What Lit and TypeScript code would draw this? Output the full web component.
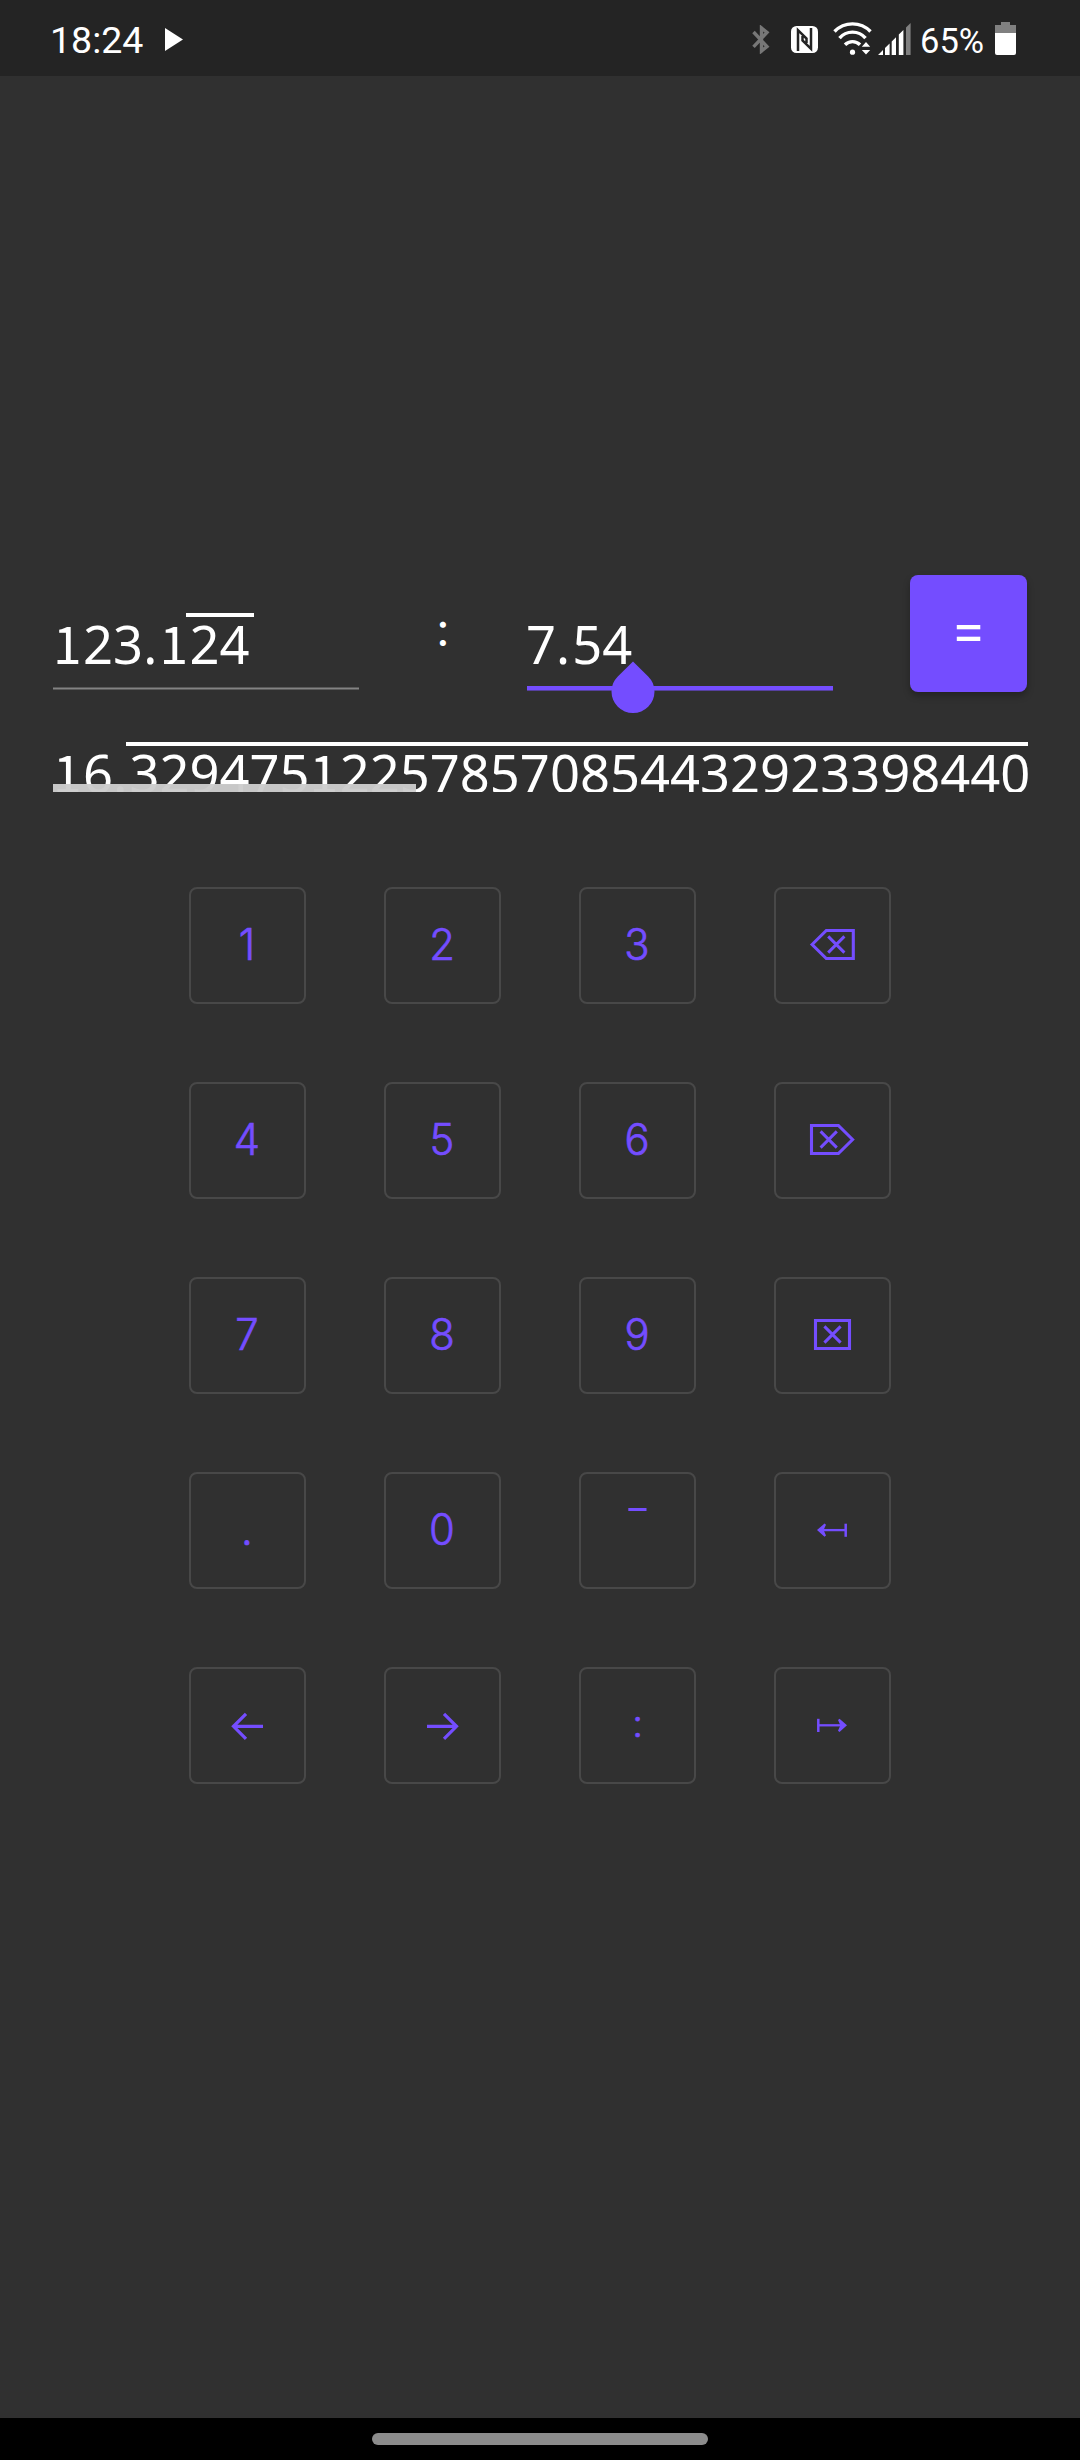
import { LitElement, html, css, svg } from "lit";
import { customElement, property, state } from "lit/decorators.js";
import { classMap } from "lit/directives/class-map.js";

const icons: Record<string, unknown> = {
  backspace: svg`<path d="M38.1 57.5 52.3 43.5H79.3V71.5H52.3Z" stroke-width="3.1"/><path d="M54.2 49.4 70.4 65.6M70.4 49.4 54.2 65.6" stroke-width="3"/>`,
  remove: svg`<path d="M78.6 57.5 64.4 43.5H37.5V71.5H64.4Z" stroke-width="3.1"/><path d="M46.6 49.4 62.8 65.6M62.8 49.4 46.6 65.6" stroke-width="3"/>`,
  clear: svg`<path d="M41.5 43.5H75.5V71.5H41.5Z" stroke-width="3.1"/><path d="M50.4 49.4 66.6 65.6M66.6 49.4 50.4 65.6" stroke-width="3"/>`,
  overline: svg`<path d="M49.3 37.5H67.5" stroke-width="3"/>`,
  start: svg`<path d="M48 58.1H72" stroke-width="2.3"/><path d="M71.7 51.7V64.8" stroke-width="2.5"/><path class="solid" d="M43 58.1 50.5 51.6 52 52.8 49.6 58.1 52 63.5 50.5 64.8Z"/>`,
  end: svg`<path d="M44 58.3H68" stroke-width="2.3"/><path d="M44.3 51.8V65" stroke-width="2.5"/><path class="solid" d="M73 58.3 65.5 51.8 64 53 66.4 58.3 64 63.7 65.5 65Z"/>`,
  left: svg`<path d="M57 46.8 44.5 59.3 57 71.8M44.5 59.3H74" stroke-width="3.2"/>`,
  right: svg`<path d="M60 46.8 72.5 59.3 60 71.8M72.5 59.3H43" stroke-width="3.2"/>`,
};

interface Key {
  text?: string;
  icon?: string;
  label?: string;
}

const digit = (text: string): Key => ({ text });

const KEYS: Key[] = [
  digit("1"), digit("2"), digit("3"), { icon: "backspace", label: "Backspace" },
  digit("4"), digit("5"), digit("6"), { icon: "remove", label: "Delete" },
  digit("7"), digit("8"), digit("9"), { icon: "clear", label: "Clear" },
  digit("."), digit("0"), { icon: "overline", label: "Repeating" }, { icon: "start", label: "Start" },
  { icon: "left", label: "Left" }, { icon: "right", label: "Right" }, digit(":"), { icon: "end", label: "End" },
];

// The figure one carries a foot and the decimal point gets extra room.
const figures = (value: string) =>
  value
    .split(/([1.])/)
    .filter(Boolean)
    .map((part) =>
      part === "1" ? html`<span class="one">1</span>` : part === "." ? html`<span class="point">.</span>` : part
    );

@customElement("status-bar")
class StatusBar extends LitElement {
  static styles = css`
    :host {
      display: flex;
      align-items: flex-start;
      box-sizing: border-box;
      height: 76px;
      padding: 0 64px 0 50px;
      background: #242424;
      color: #fff;
      font-family: Roboto, sans-serif;
    }
    svg { display: block; flex: none; }
    .time { width: 94px; font-size: 37.5px; line-height: 81px; }
    .play { margin: 28px 0 0 21px; }
    .right { display: flex; margin-left: auto; }
    .bt { margin-top: 25px; }
    .nfc { margin: 26px 0 0 21px; }
    .wifi { margin: 22px 0 0 15px; }
    .signal { margin: 23px 0 0 6px; }
    .level { width: 75px; font-size: 34.5px; line-height: 82px; margin-left: 9px; white-space: nowrap; }
    .battery { margin: 22px 0 0 0; }
  `;

  render() {
    return html`
      <span class="time">18:24</span>
      <svg class="play" width="18" height="24" viewBox="0 0 18 24"><path d="M0 0 18 11.5 0 23Z" fill="#fff" /></svg>
      <div class="right">
        <svg class="bt" width="18" height="29" viewBox="0 0 18 29">
          <path d="M1.5 7 15 21.5 9.5 26V3L15 7.5 1.5 21.8" fill="none" stroke="#777" stroke-width="3.4" />
        </svg>
        <svg class="nfc" width="27" height="27" viewBox="0 0 27 27">
          <rect width="27" height="27" rx="5.5" fill="#fff" />
          <path d="M7 25V4.2L15.5 12.5V17M20 2V22.8L11.5 14.5V10" fill="none" stroke="#242424" stroke-width="2.5" />
        </svg>
        <svg class="wifi" width="39" height="33" viewBox="0 0 39 33">
          <g fill="none" stroke="#fff" stroke-width="3.4">
            <path d="M1.5 9.5A25 25 0 0 1 37.5 9.5" />
            <path d="M6.5 16.2A17 17 0 0 1 32.5 16.2" />
            <path d="M12 22.8A10.5 10.5 0 0 1 27 22.8" />
          </g>
          <circle cx="19.5" cy="30.2" r="2.6" fill="#fff" />
          <path d="M33 20 37.2 24.8H28.8ZM33 32.6 37.2 28H28.8Z" fill="#fff" />
        </svg>
        <svg class="signal" width="33" height="32" viewBox="0 0 33 32">
          <path d="M0 32 5 27V32ZM7 32V25L11.6 20.5V32ZM13.7 32V18.6L18 14.3V32ZM20.8 32V11.6L25.4 7V32Z" fill="#fff" />
          <path d="M28 32V4.6L32.6 0V32Z" fill="#808080" />
        </svg>
        <span class="level">65%</span>
        <svg class="battery" width="21" height="33" viewBox="0 0 21 33">
          <path d="M6 0H15V3H21V11H0V3H6Z" fill="#808080" />
          <path d="M0 11H21V31Q21 33 19 33H2Q0 33 0 31Z" fill="#fff" />
        </svg>
      </div>
    `;
  }
}

@customElement("key-button")
class KeyButton extends LitElement {
  @property({ attribute: false }) key: Key = {};

  static styles = css`
    :host { display: block; }
    .key {
      display: block;
      box-sizing: border-box;
      width: 117px;
      height: 117px;
      margin: 0;
      padding: 0;
      border: 2px solid #484848;
      border-radius: 8px;
      background: transparent;
      color: #744dff;
      font: 300 43.5px/110px Inter, sans-serif;
      -webkit-text-stroke: 0.7px #744dff;
      text-align: center;
    }
    .glyph { display: block; height: 113px; transform: translateX(-0.5px) scaleX(0.96); }
    .colon { font-size: 38px; line-height: 108px; transform: none; }
    svg {
      display: block;
      margin: -2px;
      fill: none;
      stroke: currentColor;
    }
    .solid { fill: currentColor; stroke: none; }
  `;

  render() {
    const { text, icon, label } = this.key;
    return html`<button class="key" aria-label=${label ?? text ?? ""}>
      ${icon
        ? html`<svg width="117" height="117" viewBox="0 0 117 117">${icons[icon]}</svg>`
        : html`<span class=${classMap({ glyph: true, colon: text === ":" })}>${text}</span>`}
    </button>`;
  }
}

@customElement("app-root")
class AppRoot extends LitElement {
  @state() private quotient = { head: "16.", period: "329475122578570854432923398440" };

  static styles = css`
    :host {
      display: flex;
      flex-direction: column;
      width: 1080px;
      height: 2460px;
      overflow: hidden;
      background: #303030;
      color: #fff;
    }
    main { flex: 1; padding: 499px 52px 0 53px; }
    .expression {
      display: grid;
      grid-template-columns: 306px 168px 306px 117px;
      justify-content: start;
      height: 117px;
    }
    .number {
      font-family: "Noto Sans", sans-serif;
      font-size: 52.5px;
      line-height: 85px;
      white-space: nowrap;
    }
    .one {
      font-family: "Noto Sans CJK SC", sans-serif;
      font-size: 51.5px;
      line-height: 0;
      letter-spacing: 1.5px;
    }
    .point { letter-spacing: 2.2px; }
    .field { position: relative; padding-top: 26px; }
    .rule {
      height: 3px;
      margin-top: 1px;
      background: linear-gradient(#595959 1px, #838383 1px, #838383 2px, #595959 2px);
    }
    .rule.active {
      height: 5px;
      margin-top: 0;
      background: linear-gradient(#744dff 4px, #5640a0 4px);
    }
    .repeat { position: relative; display: inline-block; vertical-align: top; }
    .repeat::before {
      content: "";
      position: absolute;
      left: -4px;
      right: -4px;
      top: 12px;
      height: 4px;
      background: #fff;
    }
    .shifted { margin-left: -1px; }
    .operator {
      font: 400 46px/109px Inter, sans-serif;
      text-align: center;
    }
    .handle { position: absolute; left: 84px; top: 86px; }
    .equals {
      width: 117px;
      height: 117px;
      margin: 0 0 0 77px;
      padding: 0 0 9px;
      border: 0;
      border-radius: 8px;
      background: #744dff;
      color: #fff;
      font: 400 53px/105px Inter, sans-serif;
      text-align: center;
      box-shadow: 0 4px 7px rgba(0, 0, 0, 0.28);
    }
    .quotient {
      position: relative;
      height: 62px;
      margin-top: 38px;
      overflow: hidden;
    }
    .quotient .repeat::before { left: -3px; }
    .thumb {
      position: absolute;
      left: 0;
      bottom: 0;
      width: 363px;
      height: 8px;
      background: rgba(204, 204, 204, 0.97);
    }
    .pad {
      display: grid;
      grid-template-columns: repeat(4, 117px);
      gap: 78px;
      margin: 95px 0 0 136px;
    }
    footer {
      display: flex;
      justify-content: center;
      align-items: flex-start;
      box-sizing: border-box;
      height: 42px;
      padding-top: 15px;
      background: #000;
    }
    .pill { width: 336px; height: 12px; border-radius: 6px; background: #8c8c8c; }
  `;

  render() {
    return html`
      <status-bar></status-bar>
      <main>
        <div class="expression">
          <div class="field number">
            <div>${figures("123.1")}<span class="repeat">24</span></div>
            <div class="rule"></div>
          </div>
          <div class="operator">:</div>
          <div class="field number">
            <div class="shifted">${figures("7.54")}</div>
            <div class="rule active"></div>
            <svg class="handle" width="44" height="54" viewBox="0 0 44 54">
              <path d="M22 0.5 37.2 15.4A21.5 21.5 0 1 1 6.8 15.4Z" fill="#744dff" />
            </svg>
          </div>
          <button class="equals">=</button>
        </div>
        <div class="quotient number">
          ${figures(this.quotient.head)}<span class="repeat">${figures(this.quotient.period)}</span>
          <div class="thumb"></div>
        </div>
        <div class="pad">${KEYS.map((key) => html`<key-button .key=${key}></key-button>`)}</div>
      </main>
      <footer><div class="pill"></div></footer>
    `;
  }
}
